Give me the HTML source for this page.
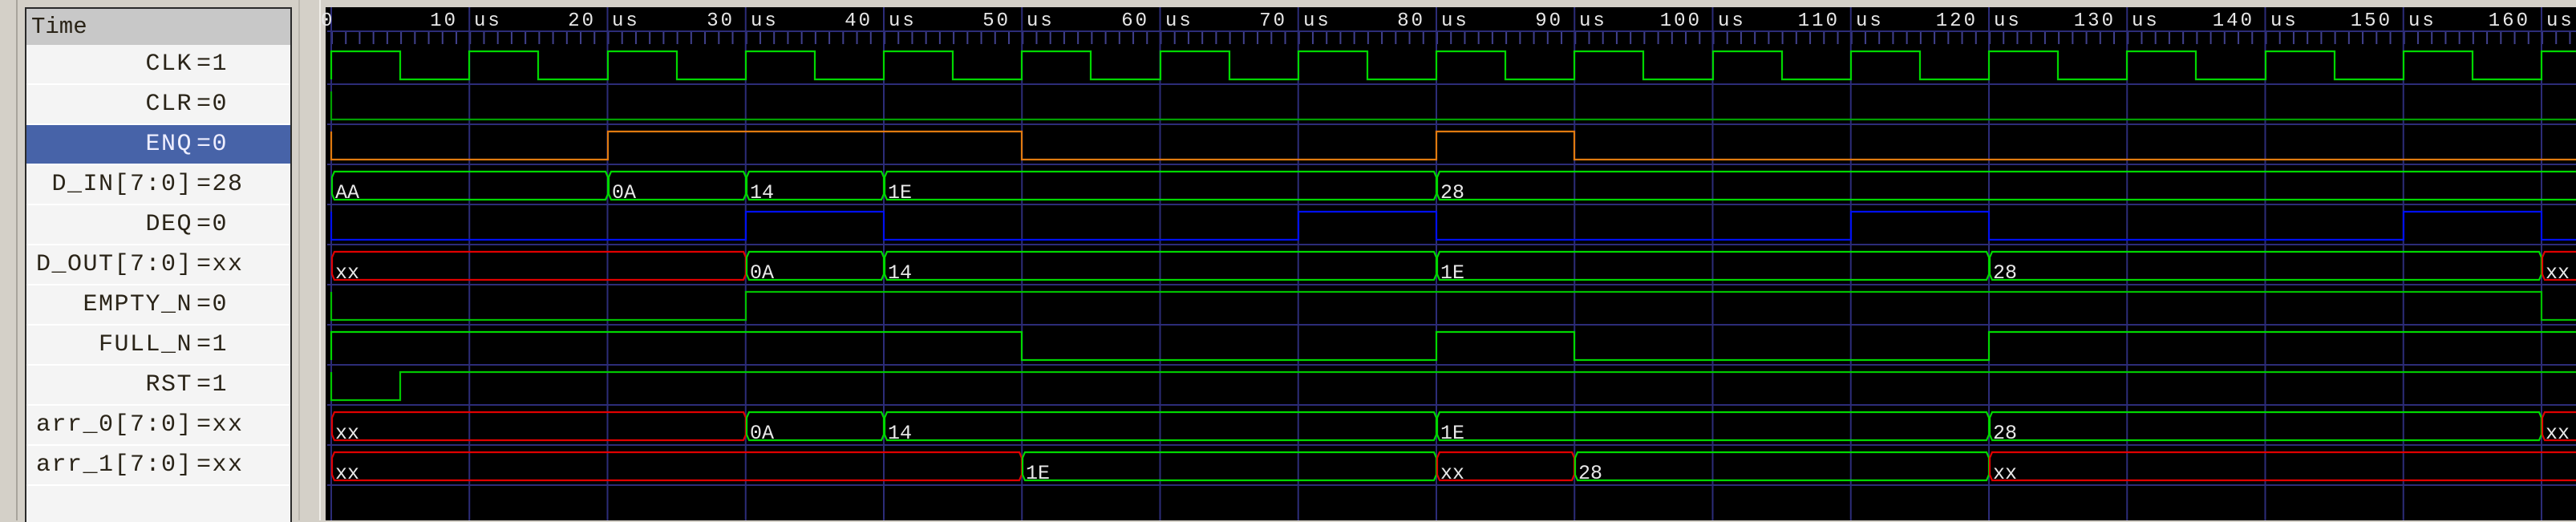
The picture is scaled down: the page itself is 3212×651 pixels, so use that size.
<!DOCTYPE html>
<html><head><meta charset="utf-8"><style>
html,body{margin:0;padding:0;width:3212px;height:649px;overflow:hidden;background:#d4d0c8;}
.lp{position:absolute;left:31px;top:9px;width:329px;height:640px;background:#f4f4f4;border:2px solid #2a2a2a;border-bottom:none;overflow:hidden;}
.hdr{position:absolute;left:0;top:0;width:329px;height:45px;background:#c8c8c8;font:29px "Liberation Mono",monospace;color:#2a2418;}
.hdr span{position:absolute;left:6px;top:6px;}
.row{position:absolute;left:0;width:329px;height:48px;border-bottom:2px solid #fff;font:30px "Liberation Mono",monospace;color:#2a2418;letter-spacing:1.5px;}
.row .n{position:absolute;right:122px;top:7px;white-space:pre;}
.row .v{position:absolute;left:212px;top:7px;white-space:pre;}
.sel{background:#4763a8;color:#eef;}
</style></head><body>
<div style="position:absolute;left:20px;top:0;width:2px;height:649px;background:#a8a49c"></div>
<div style="position:absolute;left:372px;top:0;width:2px;height:649px;background:#bcb8b0"></div>
<div style="position:absolute;left:398px;top:0;width:2px;height:649px;background:#f0eee8"></div>
<div class="lp">
<div class="hdr"><span>Time</span></div>
<div class="row" style="top:45px"><span class="n">CLK</span><span class="v">=1</span></div>
<div class="row" style="top:95px"><span class="n">CLR</span><span class="v">=0</span></div>
<div class="row sel" style="top:145px"><span class="n">ENQ</span><span class="v">=0</span></div>
<div class="row" style="top:195px"><span class="n">D_IN[7:0]</span><span class="v">=28</span></div>
<div class="row" style="top:245px"><span class="n">DEQ</span><span class="v">=0</span></div>
<div class="row" style="top:295px"><span class="n">D_OUT[7:0]</span><span class="v">=xx</span></div>
<div class="row" style="top:345px"><span class="n">EMPTY_N</span><span class="v">=0</span></div>
<div class="row" style="top:395px"><span class="n">FULL_N</span><span class="v">=1</span></div>
<div class="row" style="top:445px"><span class="n">RST</span><span class="v">=1</span></div>
<div class="row" style="top:495px"><span class="n">arr_0[7:0]</span><span class="v">=xx</span></div>
<div class="row" style="top:545px"><span class="n">arr_1[7:0]</span><span class="v">=xx</span></div>
</div>
<svg style="position:absolute;left:0;top:0" width="3212" height="649" xmlns="http://www.w3.org/2000/svg">
<defs>
<pattern id="tk" x="413" y="0" width="17.225" height="649" patternUnits="userSpaceOnUse"><rect x="0" y="40" width="2" height="15" fill="#40408c"/></pattern>
<pattern id="gr" x="412" y="0" width="172.25" height="649" patternUnits="userSpaceOnUse"><rect x="0" y="0" width="2" height="649" fill="#2c2c78"/></pattern>
</defs>
<rect x="406" y="9" width="2806" height="640" fill="#000"/>
<rect x="408" y="40" width="2804" height="16" fill="url(#tk)"/>
<rect x="408" y="9" width="2804" height="640" fill="url(#gr)"/>
<rect x="408" y="38" width="2804" height="2" fill="#2c2c78"/>
<g fill="#2c2c78">
<rect x="408" y="104" width="2804" height="2"/><rect x="408" y="154" width="2804" height="2"/><rect x="408" y="204" width="2804" height="2"/><rect x="408" y="254" width="2804" height="2"/><rect x="408" y="304" width="2804" height="2"/><rect x="408" y="354" width="2804" height="2"/><rect x="408" y="404" width="2804" height="2"/><rect x="408" y="454" width="2804" height="2"/><rect x="408" y="504" width="2804" height="2"/><rect x="408" y="554" width="2804" height="2"/><rect x="408" y="604" width="2804" height="2"/>
</g>
<g font-family="Liberation Mono, monospace" font-size="24" fill="#e8e8e8" letter-spacing="3">
<text x="400" y="32">0</text>
<text x="571" y="32" text-anchor="end">10</text><text x="591" y="32">us</text>
<text x="743" y="32" text-anchor="end">20</text><text x="763" y="32">us</text>
<text x="916" y="32" text-anchor="end">30</text><text x="936" y="32">us</text>
<text x="1088" y="32" text-anchor="end">40</text><text x="1108" y="32">us</text>
<text x="1260" y="32" text-anchor="end">50</text><text x="1280" y="32">us</text>
<text x="1433" y="32" text-anchor="end">60</text><text x="1453" y="32">us</text>
<text x="1605" y="32" text-anchor="end">70</text><text x="1625" y="32">us</text>
<text x="1777" y="32" text-anchor="end">80</text><text x="1797" y="32">us</text>
<text x="1949" y="32" text-anchor="end">90</text><text x="1969" y="32">us</text>
<text x="2122" y="32" text-anchor="end">100</text><text x="2142" y="32">us</text>
<text x="2294" y="32" text-anchor="end">110</text><text x="2314" y="32">us</text>
<text x="2466" y="32" text-anchor="end">120</text><text x="2486" y="32">us</text>
<text x="2638" y="32" text-anchor="end">130</text><text x="2658" y="32">us</text>
<text x="2811" y="32" text-anchor="end">140</text><text x="2831" y="32">us</text>
<text x="2983" y="32" text-anchor="end">150</text><text x="3003" y="32">us</text>
<text x="3155" y="32" text-anchor="end">160</text><text x="3175" y="32">us</text>
</g>
<g fill="none" stroke-width="2.2">
<polyline stroke="#00d800" points="413,99 413,64 499,64 499,99 585,99 585,64 671,64 671,99 758,99 758,64 844,64 844,99 930,99 930,64 1016,64 1016,99 1102,99 1102,64 1188,64 1188,99 1274,99 1274,64 1360,64 1360,99 1447,99 1447,64 1533,64 1533,99 1619,99 1619,64 1705,64 1705,99 1791,99 1791,64 1877,64 1877,99 1963,99 1963,64 2049,64 2049,99 2136,99 2136,64 2222,64 2222,99 2308,99 2308,64 2394,64 2394,99 2480,99 2480,64 2566,64 2566,99 2652,99 2652,64 2738,64 2738,99 2825,99 2825,64 2911,64 2911,99 2997,99 2997,64 3083,64 3083,99 3169,99 3169,64 3212,64"/>
<polyline stroke="#00a000" points="413,114 413,149 3212,149"/>
<polyline stroke="#e07a10" points="413,164 413,199 758,199 758,164 1274,164 1274,199 1791,199 1791,164 1963,164 1963,199 3212,199"/>
<polyline stroke="#0010f0" points="413,264 413,299 930,299 930,264 1102,264 1102,299 1619,299 1619,264 1791,264 1791,299 2308,299 2308,264 2480,264 2480,299 2997,299 2997,264 3169,264 3169,299 3212,299"/>
<polyline stroke="#00c000" points="413,364 413,399 930,399 930,364 3169,364 3169,399 3212,399"/>
<polyline stroke="#00d800" points="413,449 413,414 1274,414 1274,449 1791,449 1791,414 1963,414 1963,449 2480,449 2480,414 3212,414"/>
<polyline stroke="#00c800" points="413,464 413,499 499,499 499,464 3212,464"/>
<g stroke="#00d800">
<polygon points="414,221 417,214 755,214 758,221 758,242 755,249 417,249 414,242"/>
<polygon points="759,221 762,214 927,214 930,221 930,242 927,249 762,249 759,242"/>
<polygon points="931,221 934,214 1099,214 1102,221 1102,242 1099,249 934,249 931,242"/>
<polygon points="1103,221 1106,214 1788,214 1791,221 1791,242 1788,249 1106,249 1103,242"/>
<polygon points="1792,221 1795,214 3230,214 3230,249 1795,249 1792,242"/>
</g>
<polygon stroke="#e00000" points="414,321 417,314 927,314 930,321 930,342 927,349 417,349 414,342"/>
<g stroke="#00d800">
<polygon points="931,321 934,314 1099,314 1102,321 1102,342 1099,349 934,349 931,342"/>
<polygon points="1103,321 1106,314 1788,314 1791,321 1791,342 1788,349 1106,349 1103,342"/>
<polygon points="1792,321 1795,314 2477,314 2480,321 2480,342 2477,349 1795,349 1792,342"/>
<polygon points="2481,321 2484,314 3166,314 3169,321 3169,342 3166,349 2484,349 2481,342"/>
</g>
<polygon stroke="#e00000" points="3170,321 3173,314 3230,314 3230,349 3173,349 3170,342"/>
<polygon stroke="#e00000" points="414,521 417,514 927,514 930,521 930,542 927,549 417,549 414,542"/>
<g stroke="#00d800">
<polygon points="931,521 934,514 1099,514 1102,521 1102,542 1099,549 934,549 931,542"/>
<polygon points="1103,521 1106,514 1788,514 1791,521 1791,542 1788,549 1106,549 1103,542"/>
<polygon points="1792,521 1795,514 2477,514 2480,521 2480,542 2477,549 1795,549 1792,542"/>
<polygon points="2481,521 2484,514 3166,514 3169,521 3169,542 3166,549 2484,549 2481,542"/>
</g>
<polygon stroke="#e00000" points="3170,521 3173,514 3230,514 3230,549 3173,549 3170,542"/>
<polygon stroke="#e00000" points="414,571 417,564 1271,564 1274,571 1274,592 1271,599 417,599 414,592"/>
<polygon stroke="#00d800" points="1275,571 1278,564 1788,564 1791,571 1791,592 1788,599 1278,599 1275,592"/>
<polygon stroke="#e00000" points="1792,571 1795,564 1960,564 1963,571 1963,592 1960,599 1795,599 1792,592"/>
<polygon stroke="#00d800" points="1964,571 1967,564 2477,564 2480,571 2480,592 2477,599 1967,599 1964,592"/>
<polygon stroke="#e00000" points="2481,571 2484,564 3230,564 3230,599 2484,599 2481,592"/>
</g>
<g font-family="Liberation Mono, monospace" font-size="25" fill="#e8e8e8">
<text x="418" y="247">AA</text><text x="763" y="247">0A</text><text x="935" y="247">14</text><text x="1107" y="247">1E</text><text x="1796" y="247">28</text>
<text x="418" y="347">xx</text><text x="935" y="347">0A</text><text x="1107" y="347">14</text><text x="1796" y="347">1E</text><text x="2485" y="347">28</text><text x="3174" y="347">xx</text>
<text x="418" y="547">xx</text><text x="935" y="547">0A</text><text x="1107" y="547">14</text><text x="1796" y="547">1E</text><text x="2485" y="547">28</text><text x="3174" y="547">xx</text>
<text x="418" y="597">xx</text><text x="1279" y="597">1E</text><text x="1796" y="597">xx</text><text x="1968" y="597">28</text><text x="2485" y="597">xx</text>
</g>
</svg>
</body></html>
